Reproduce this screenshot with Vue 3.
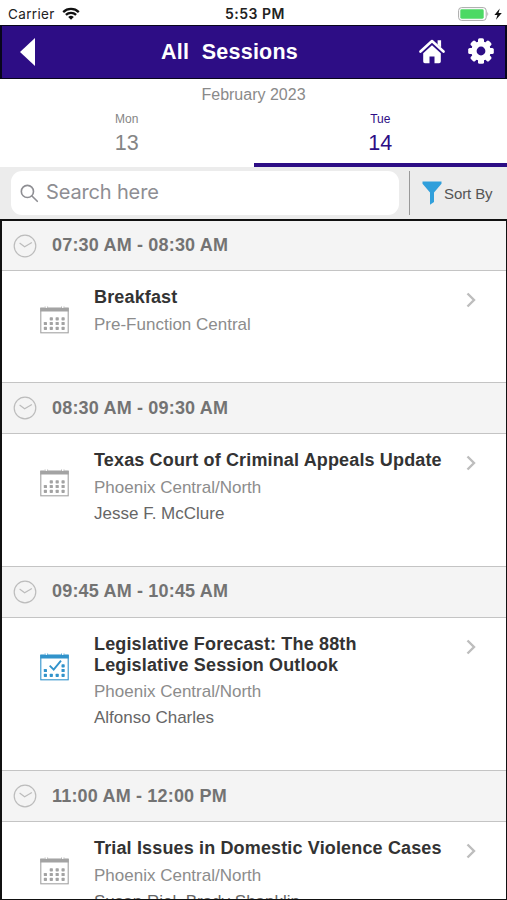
<template>
  <div class="app">
    <header class="status">
      <div class="carrier">
        <span>Carrier</span>
        <svg class="wifi" viewBox="0 0 18 13">
          <path d="M1.2 5.1a11.2 11.2 0 0 1 15.6 0" />
          <path d="M3.9 7.9a7.3 7.3 0 0 1 10.2 0" />
          <path class="wifi-dot" d="M6.2 10a4 4 0 0 1 5.6 0L9 12.8z" />
        </svg>
      </div>
      <div class="clock">5:53 PM</div>
      <div class="power">
        <svg class="battery" viewBox="0 0 32 14">
          <rect x="0.6" y="0.6" width="27.6" height="12.8" rx="3" fill="#fff" stroke="#a9a9a9" />
          <rect x="2.3" y="2.3" width="23.4" height="9.4" rx="1.4" fill="#4cd964" />
          <path d="M29.4 4.8q1.8 2.2 0 4.4z" fill="#a9a9a9" />
        </svg>
        <svg class="bolt" viewBox="0 0 8 12">
          <path d="M5.8 0.5L0.4 7h3L2 11.8L7.8 5H4.5z" fill="#111" />
        </svg>
      </div>
    </header>

    <nav class="navbar">
      <svg class="back" viewBox="0 0 16 30"><path d="M16 0v30L0 15z" fill="#fff" /></svg>
      <h1 class="nav-title">All&nbsp; Sessions</h1>
      <svg class="home" viewBox="0 0 26 26">
        <path d="M1.5 13.5L13 3l11.5 10.5" fill="none" stroke="#fff" stroke-width="2.6" stroke-linecap="round" stroke-linejoin="round" />
        <path d="M18.6 2.2h3.5v7.2l-3.5-3z" fill="#fff" />
        <path d="M13 7.3l8.8 8v8.2q0 1.7-1.7 1.7h-4.6v-6.7h-5v6.7H5.9q-1.7 0-1.7-1.7v-8.2z" fill="#fff" />
      </svg>
      <svg class="gear" viewBox="0 0 26 26">
        <g fill="#fff">
          <rect
            v-for="angle in teeth"
            :key="angle"
            x="10"
            y="0.2"
            width="6"
            height="7"
            rx="1.6"
            :transform="`rotate(${angle} 13 13)`"
          />
        </g>
        <circle cx="13" cy="13" r="7.1" fill="none" stroke="#fff" stroke-width="5.4" />
      </svg>
    </nav>

    <section class="dates">
      <div class="month">February 2023</div>
      <div class="days">
        <div v-for="day in days" :key="day.date" class="day" :class="{ active: day.date === selected }" @click="selected = day.date">
          <span class="day-name">{{ day.name }}</span>
          <span class="day-number">{{ day.date }}</span>
        </div>
      </div>
    </section>

    <div class="toolbar">
      <div class="search">
        <svg class="magnifier" viewBox="0 0 20 20">
          <circle cx="7.8" cy="7.8" r="6.4" />
          <path d="M12.6 12.6l5.6 5.6" />
        </svg>
        <span class="placeholder">Search here</span>
      </div>
      <div class="sort">
        <svg class="funnel" viewBox="0 0 20 24">
          <path d="M0.5 0.5h19v2.2L12 11.5v9.6L8 23.8V11.5L0.5 2.7z" fill="#309fdb" />
        </svg>
        <span class="sort-label">Sort By</span>
      </div>
    </div>

    <main class="list">
      <template v-for="session in sessions" :key="session.time">
        <div class="time-row">
          <svg class="time-icon" viewBox="0 0 24 24">
            <circle cx="12" cy="12" r="10.8" />
            <path d="M6.6 9l5 3.7l7.3-4.2" />
          </svg>
          <span class="time">{{ session.time }}</span>
        </div>
        <div class="session">
          <svg class="calendar" :class="{ added: session.added }" viewBox="0 0 29 28">
            <rect x="0.8" y="2.5" width="27.4" height="24.3" fill="none" stroke="currentColor" stroke-width="1.1" />
            <path d="M0.3 1.6h4l1 1h2l1-1h12.4l1 1h2l1-1h4v4H0.3z" fill="currentColor" />
            <path d="M5.1 0.5v1.6M7.6 0.5v1.6M21.5 0.5v1.6M24 0.5v1.6" stroke="currentColor" stroke-width="0.8" />
            <rect
              v-for="dot in session.added ? addedDots : dots"
              :key="dot.join()"
              :x="dot[0]"
              :y="dot[1]"
              width="3.2"
              height="3.2"
              rx="0.7"
              fill="currentColor"
            />
            <path v-if="session.added" d="M9.7 12.6l4 4L21 7.6" fill="none" stroke="currentColor" stroke-width="1.9" />
          </svg>
          <div class="info">
            <h2 class="title">{{ session.title }}</h2>
            <p class="place">{{ session.place }}</p>
            <p v-if="session.speaker" class="speaker">{{ session.speaker }}</p>
          </div>
          <svg class="chevron" viewBox="0 0 10 16">
            <path d="M1.5 1.5L8 8l-6.5 6.5" />
          </svg>
        </div>
      </template>
    </main>
  </div>
</template>

<script setup>
import { ref } from 'vue'

const selected = ref(14)

const days = [
  { name: 'Mon', date: 13 },
  { name: 'Tue', date: 14 },
]

const teeth = [0, 45, 90, 135, 180, 225, 270, 315]

// calendar cells, [x, y]
const dots = [
  [9.7, 11.2], [15.6, 11.2], [21.5, 11.2],
  [3.8, 15.9], [9.7, 15.9], [15.6, 15.9], [21.5, 15.9],
  [3.8, 20.8], [9.7, 20.8], [15.6, 20.8], [21.5, 20.8],
]
const addedDots = [
  [21.5, 11.2], [3.8, 15.9], [21.5, 15.9],
  [3.8, 20.8], [9.7, 20.8], [15.6, 20.8], [21.5, 20.8],
]

const sessions = [
  { time: '07:30 AM - 08:30 AM', title: 'Breakfast', place: 'Pre-Function Central' },
  {
    time: '08:30 AM - 09:30 AM',
    title: 'Texas Court of Criminal Appeals Update',
    place: 'Phoenix Central/North',
    speaker: 'Jesse F. McClure',
  },
  {
    time: '09:45 AM - 10:45 AM',
    title: 'Legislative Forecast: The 88th Legislative Session Outlook',
    place: 'Phoenix Central/North',
    speaker: 'Alfonso Charles',
    added: true,
  },
  {
    time: '11:00 AM - 12:00 PM',
    title: 'Trial Issues in Domestic Violence Cases',
    place: 'Phoenix Central/North',
    speaker: 'Susan Riel, Brady Shanklin',
  },
]
</script>

<style>
body {
  margin: 0;
}
</style>

<style scoped>
.app {
  display: flex;
  flex-direction: column;
  width: 100%;
  height: 900px;
  overflow: hidden;
  background: #fff;
  font-family: 'Liberation Sans', Arial, sans-serif;
}

.app * {
  box-sizing: border-box;
}

svg {
  display: block;
  flex: none;
}

.status {
  display: grid;
  grid-template-columns: 1fr auto 1fr;
  align-items: center;
  flex: none;
  height: 25px;
  padding: 2px 5px 0 8px;
  color: #222;
  font-family: Inter, sans-serif;
}

.carrier {
  display: flex;
  align-items: center;
  gap: 7px;
  font-size: 13.5px;
  letter-spacing: 0.35px;
}

.wifi {
  width: 18px;
  height: 13px;
  fill: none;
  stroke: #111;
  stroke-width: 2.3;
}

.wifi-dot {
  fill: #111;
  stroke: none;
}

.clock {
  font-size: 14px;
  font-weight: 600;
  letter-spacing: 0.5px;
}

.power {
  display: flex;
  align-items: center;
  justify-content: flex-end;
  gap: 4px;
}

.battery {
  width: 32px;
  height: 14px;
}

.bolt {
  width: 8px;
  height: 12px;
}

.navbar {
  display: flex;
  align-items: center;
  flex: none;
  height: 54px;
  padding: 0 11px 0 18px;
  border: 2px solid #08051c;
  border-top-width: 1px;
  border-bottom-width: 1px;
  background: #2d0d85;
}

.back {
  width: 15px;
  height: 30px;
}

.nav-title {
  flex: 1;
  margin: 0;
  padding-left: 126px;
  color: #fff;
  font-size: 21.5px;
  font-weight: 700;
  line-height: 30px;
  letter-spacing: 0.25px;
  white-space: nowrap;
}

.home {
  width: 26px;
  height: 26px;
  margin: 0 23px 2px 0;
}

.gear {
  width: 26px;
  height: 26px;
  margin-bottom: 2px;
}

.dates {
  display: flex;
  flex-direction: column;
  flex: none;
  height: 88px;
}

.month {
  padding-top: 6px;
  color: #8a8a8a;
  font-size: 16px;
  line-height: 19px;
  text-align: center;
}

.days {
  display: grid;
  grid-template-columns: 1fr 1fr;
  flex: 1;
}

.day {
  display: flex;
  flex-direction: column;
  align-items: center;
  padding-top: 8px;
  border-bottom: 4px solid transparent;
  color: #858585;
}

.day.active {
  border-bottom-color: #2d0d85;
  color: #2d0d85;
}

.day-name {
  font-size: 12px;
  line-height: 14px;
}

.day-number {
  margin-top: 5px;
  font-size: 21.5px;
  line-height: 24px;
}

.toolbar {
  display: flex;
  flex: none;
  height: 52px;
  padding: 4px 0 4px 11px;
  background: #ececec;
}

.search {
  display: flex;
  align-items: center;
  width: 388px;
  padding-left: 9px;
  border-radius: 11px;
  background: #fff;
}

.magnifier {
  width: 19px;
  height: 19px;
  fill: none;
  stroke: #8e8e93;
  stroke-width: 1.7;
  stroke-linecap: round;
}

.placeholder {
  padding-left: 7px;
  color: #8e8e93;
  font-family: Inter, sans-serif;
  font-size: 20px;
  letter-spacing: -0.15px;
  line-height: 24px;
  margin-top: -2px;
}

.sort {
  display: flex;
  align-items: center;
  flex: 1;
  margin-left: 10px;
  padding-left: 12px;
  border-left: 1px solid #999;
}

.funnel {
  width: 20px;
  height: 24px;
}

.sort-label {
  padding-left: 2px;
  color: #555;
  font-size: 15px;
  letter-spacing: -0.1px;
  white-space: nowrap;
}

.list {
  flex: 1;
  min-height: 0;
  overflow: hidden;
  border: 2px solid #111;
  border-bottom-width: 1px;
  border-right-width: 1px;
}

.time-row {
  display: flex;
  align-items: center;
  height: 52px;
  padding-left: 11px;
  border-top: 1px solid #c4c4c4;
  border-bottom: 1px solid #c4c4c4;
  background: #f4f4f4;
}

.time-row:first-child {
  height: 50px;
  border-top: 0;
}

.time-icon {
  width: 24px;
  height: 24px;
  fill: none;
  stroke: #bcbcbc;
  stroke-width: 1.2;
}

.time {
  padding-left: 15px;
  color: #737373;
  font-size: 18px;
  font-weight: 700;
  letter-spacing: 0.18px;
}

.session {
  display: flex;
  align-items: flex-start;
  padding: 16px 30px 38.5px 38px;
}

.calendar {
  width: 29px;
  height: 28px;
  margin-top: 19px;
  color: #a3a3a3;
}

.calendar.added {
  color: #3193cb;
}

.info {
  flex: 1;
  min-height: 56.5px;
  padding-left: 25px;
}

.title {
  max-width: 354px;
  margin: 0 0 3px;
  padding-bottom: 0.5px;
  color: #333;
  font-size: 18px;
  font-weight: 700;
  letter-spacing: 0.15px;
  line-height: 21px;
}

.place,
.speaker {
  margin: 0;
  color: #8c8c8c;
  font-size: 17px;
  line-height: 26px;
}

.speaker {
  padding-bottom: 0.5px;
  color: #666;
}

.chevron {
  width: 10px;
  height: 16px;
  margin-top: 5px;
  fill: none;
  stroke: #bdbdbd;
  stroke-width: 2.4;
}
</style>
